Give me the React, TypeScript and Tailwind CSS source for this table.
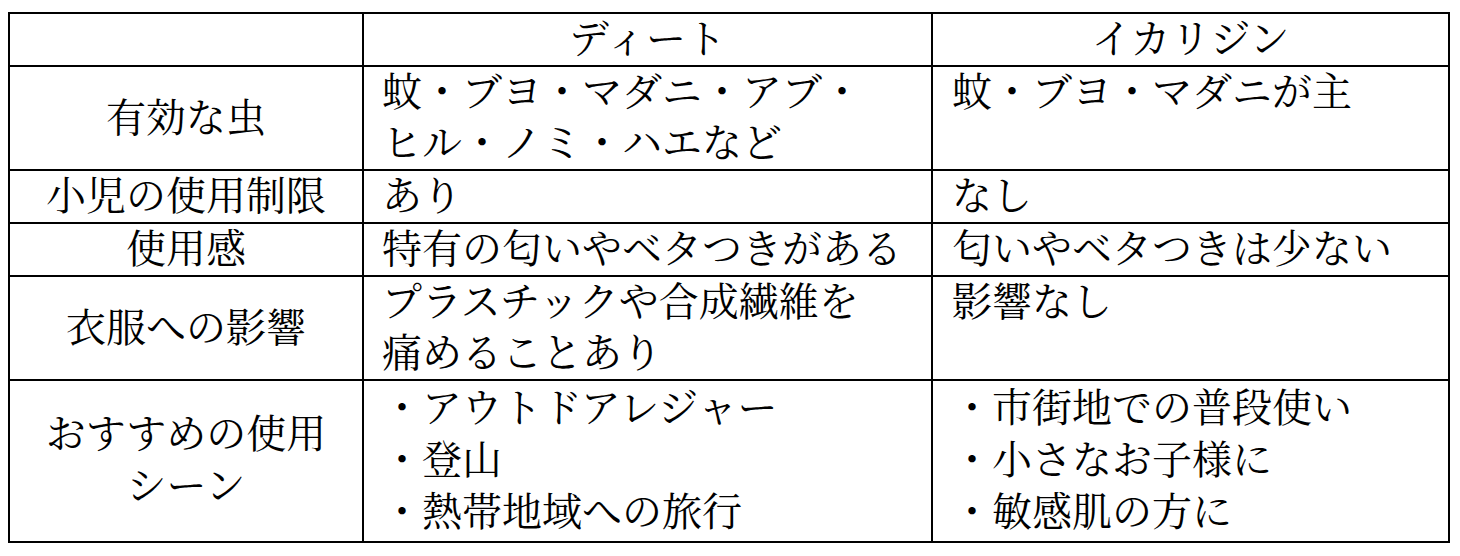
// 比較表: ディート vs イカリジン

const rows: { label: string[]; deet: string[]; icaridin: string[]; tall?: boolean }[] = [
  { label: ["有効な虫"], deet: ["蚊・ブヨ・マダニ・アブ・", "ヒル・ノミ・ハエなど"], icaridin: ["蚊・ブヨ・マダニが主"] },
  { label: ["小児の使用制限"], deet: ["あり"], icaridin: ["なし"] },
  { label: ["使用感"], deet: ["特有の匂いやベタつきがある"], icaridin: ["匂いやベタつきは少ない"] },
  { label: ["衣服への影響"], deet: ["プラスチックや合成繊維を", "痛めることあり"], icaridin: ["影響なし"] },
  {
    label: ["おすすめの使用", "シーン"],
    deet: ["・アウトドアレジャー", "・登山", "・熱帯地域への旅行"],
    icaridin: ["・市街地での普段使い", "・小さなお子様に", "・敏感肌の方に"],
    tall: true,
  },
];

function Lines({ lines }: { lines: string[] }) {
  return (
    <>
      {lines.map((l, i) => (
        <div key={i} className="whitespace-nowrap">
          {l}
        </div>
      ))}
    </>
  );
}

export default function App() {
  return (
    <div className="w-[1460px] h-[556px] bg-white pt-[12px] pl-[8px] font-['Liberation_Serif','Noto_Serif_CJK_JP','Noto_Sans_CJK_JP',serif] text-black">
      <table className="table-fixed border-collapse w-[1442px] text-[40px] leading-[51px]">
        <colgroup>
          <col className="w-[354px]" />
          <col className="w-[569px]" />
          <col />
        </colgroup>
        <thead>
          <tr>
            <th className="border-2 border-black font-normal p-0"></th>
            <th className="border-2 border-black font-normal p-0 text-center">ディート</th>
            <th className="border-2 border-black font-normal p-0 text-center">イカリジン</th>
          </tr>
        </thead>
        <tbody>
          {rows.map((r, i) => (
            <tr key={i} className={r.tall ? "leading-[52px]" : ""}>
              <td className={`border-2 border-black p-0 text-center align-middle ${r.tall ? "py-[2px]" : ""}`}>
                <Lines lines={r.label} />
              </td>
              <td className={`border-2 border-black p-0 pl-[18px] align-top ${r.tall ? "py-[2px]" : ""}`}>
                <Lines lines={r.deet} />
              </td>
              <td className={`border-2 border-black p-0 pl-[19px] align-top ${r.tall ? "py-[2px]" : ""}`}>
                <Lines lines={r.icaridin} />
              </td>
            </tr>
          ))}
        </tbody>
      </table>
    </div>
  );
}
